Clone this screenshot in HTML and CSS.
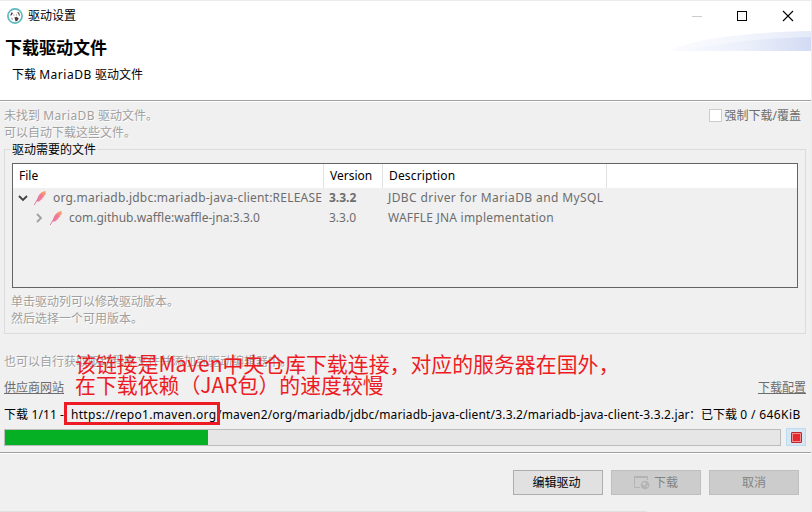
FILE: index.html
```html
<!DOCTYPE html>
<html lang="zh-CN">
<head>
<meta charset="utf-8">
<title>驱动设置</title>
<link rel="stylesheet" href="styles.css">
</head>
<body>
<div class="window">
  <div class="titlebar">
    <svg class="logo" width="16" height="16" viewBox="0 0 16 16">
      <circle cx="8" cy="8" r="7.1" fill="#fff" stroke="#5db8bf" stroke-width="1.7"/>
      <path d="M3.2 7.2 4.6 4.2 6 5 4.4 7.4ZM10 4 12 4.6 13 7.4 12 7.8 11.4 6ZM7.4 9.6 9.6 8.8 11.8 10.6 10.4 12.8 8.6 13.4 8 11.4Z" fill="#4a3d3c"/>
      <path d="M6.4 6.6h1v1h-1zM9 6.4h1v1H9zM4.6 9.6l1.4 1.6-.4.8-1.4-1.4z" fill="#8a7c7b"/>
    </svg>
    <span class="title">驱动设置</span>
    <svg class="controls" width="110" height="16" viewBox="0 0 110 16" fill="none">
      <path d="M0 8.500h10" stroke="#ccc"/>
      <rect x="45.5" y="3.5" width="9" height="9" stroke="#000"/>
      <path d="M91 3l10 10M101 3L91 13" stroke="#000" stroke-width="1.1"/>
    </svg>
  </div>
  <header class="banner">
    <div class="headings">
      <h1>下载驱动文件</h1>
      <p>下载 <span class="lat-sub">MariaDB</span> 驱动文件</p>
    </div>
    <svg class="swoosh" width="141" height="20" viewBox="0 0 141 20">
      <defs><linearGradient id="g"><stop offset="0" stop-color="#f7f9fe"/><stop offset=".5" stop-color="#ebeffa"/><stop offset="1" stop-color="#d2dbf4"/></linearGradient></defs>
      <path d="M0 20C20 8 80 1 141 0V20Z" fill="url(#g)" opacity=".6"/>
      <path d="M14 20C60 10 100 7 141 6V20Z" fill="url(#g)"/>
    </svg>
  </header>
  <main>
    <div class="intro">
      <div class="etched">未找到 <span class="lat-intro">MariaDB</span> 驱动文件。<br>可以自动下载这些文件。</div>
      <label class="force"><span class="box"></span><span>强制下载/覆盖</span></label>
    </div>
    <fieldset>
      <legend>驱动需要的文件</legend>
      <div class="table">
        <div class="row head"><span>File</span><span>Version</span><span><i class="fit-d">Description</i></span><span></span></div>
        <div class="row">
          <span class="file">
            <svg class="chev" width="10" height="10" viewBox="0 0 10 10"><path d="M1 3l4 4 4-4" fill="none" stroke="#404040" stroke-width="1.8"/></svg>
            <svg class="feather" width="14" height="16" viewBox="0 0 14 16"><use href="#feather"/></svg>
            <i class="fit-1">org.mariadb.jdbc:mariadb-java-client:RELEASE</i></span>
          <span><b>3.3.2</b></span><span><i class="fit-2">JDBC driver for MariaDB and MySQL</i></span>
        </div>
        <div class="row">
          <span class="file child">
            <svg class="chev" width="10" height="10" viewBox="0 0 10 10"><path d="M3 1l4 4-4 4" fill="none" stroke="#a0a0a0" stroke-width="1.8"/></svg>
            <svg class="feather" width="14" height="16" viewBox="0 0 14 16"><use href="#feather"/></svg>
            <i>com.github.waffle:waffle-jna:3.3.0</i></span>
          <span>3.3.0</span><span><i class="fit-4">WAFFLE JNA implementation</i></span>
        </div>
      </div>
      <div class="etched hint">单击驱动列可以修改驱动版本。<br>然后选择一个可用版本。</div>
    </fieldset>
    <div class="etched manual">也可以自行获取驱动程序文件并添加到驱动编辑器中。</div>
    <div class="links"><u>供应商网站</u><u>下载配置</u></div>
    <div class="status"><span class="s-a">下载 1/11 -</span><span class="s-b">https://repo1.maven.org</span><span class="s-c">/maven2/org/mariadb/jdbc/mariadb-java-client/3.3.2/mariadb-java-client-3.3.2.jar</span><span>：已下载 <i class="size">0 / 646KiB</i></span></div>
    <div class="progress">
      <div class="track"><div class="fill"></div></div>
      <div class="stop"><span></span></div>
    </div>
  </main>
  <footer>
    <div class="btn">编辑驱动</div>
    <div class="btn off">
      <svg width="16" height="14" viewBox="0 0 16 14"><path d="M13.5 4V.5H.5v11H6M.5 1.5h13" fill="none" stroke="#b3b3b3"/><circle cx="11" cy="9" r="4.3" fill="#b3b3b3"/><path d="M8 7l3-1 1 2-2 2zM12 10l2-1-1 3z" fill="#ccc"/></svg>
      下载</div>
    <div class="btn off">取消</div>
  </footer>
  <div class="frame"></div>
  <div class="note"><div>该链接是Maven中央仓库下载连接，对应的服务器在国外，</div><div>在下载依赖（JAR包）的速度较慢</div></div>
  <div class="edge"></div>
</div>
<svg class="defs" width="0" height="0">
  <defs>
    <linearGradient id="f" x1="1" y1="0" x2="0" y2="1"><stop offset="0" stop-color="#f9b060"/><stop offset=".4" stop-color="#f5808c"/><stop offset="1" stop-color="#e57ab0"/></linearGradient>
    <g id="feather"><path d="M12.6 1C9 1.5 5.2 4.5 4.2 9L3 11.8 5 11.4 8 11 6.6 10.2 9.8 9 8.8 8.200 11.4 6.8 10.4 6 12.8 4.400Z" fill="url(#f)"/><path d="M9 5C6 7.500 4 10 1.200 15" fill="none" stroke="#e0709f" stroke-width=".9"/></g>
  </defs>
</svg>
</body>
</html>
```
FILE: styles.css
```css
* { box-sizing: border-box; }
body { margin: 0; background: #f0f0f0; font: 12px/17px "Noto Sans", "Noto Sans CJK SC", sans-serif; color: #000; overflow: hidden; }
i { font-style: normal; }
.window { position: relative; width: 812px; height: 512px; border-top: 1px solid #ececec; border-right: 1px solid #ececec; background: #f0f0f0; white-space: nowrap; overflow: hidden; }
.titlebar { display: flex; align-items: center; height: 29px; padding-left: 7px; background: #fff; }
.title { margin-left: 5px; }
.controls { margin-left: auto; margin-right: 9px; }
.banner { display: flex; justify-content: space-between; height: 70px; background: #fff; }
.headings { padding-top: 6px; }
h1 { margin: 0 0 0 5px; font-size: 17px; line-height: 24px; font-weight: 700; }
p { margin: 6px 0 0 12px; }
.lat-sub { letter-spacing: .55px; }
.swoosh { margin-top: 1px; }
main { border-top: 1px solid #a0a0a0; box-shadow: inset 0 1px #fff; padding: 6px 5px 0 4px; height: 352px; }
.intro { display: flex; justify-content: space-between; height: 34px; }
.etched { color: #a0a0a0; text-shadow: 1px 1px #fff; }
.lat-intro { letter-spacing: .4px; }
.force { display: flex; height: 17px; margin-right: 5px; color: #6d6d6d; }
.box { width: 13px; height: 13px; margin: 2px 3px 0 0; border: 1px solid #ccc; background: #fff; }
fieldset { height: 193px; width: 802px; margin: 0; padding: 5px 7px 0; border: 1px solid #dcdcdc; }
legend { padding: 0 1px; height: 17px; line-height: 17px; margin-left: -1px; }
.table { width: 786px; height: 125px; border: 1px solid #646464; color: #6d6d6d; }
.row { display: grid; grid-template-columns: 311px 59px 224px 1fr; height: 20px; line-height: 20px; }
.row > span { padding-left: 5px; }
.head { height: 24px; line-height: 23px; background: #fff; color: #000; }
.head > span { border-right: 1px solid #e2e2e2; padding-left: 6px; }
.head > span:last-child { border: 0; }
.file { display: flex; align-items: center; }
.row > .child { padding-left: 21px; }
.feather { margin: 0 6px 0 5px; }
.fit-d { letter-spacing: .15px; }
.fit-1 { letter-spacing: .21px; }
.fit-2 { letter-spacing: .4px; }
.fit-4 { letter-spacing: .23px; }
.hint { margin: 5px 0 0 -1px; }
.manual { margin-top: 19px; }
.links { display: flex; justify-content: space-between; margin-top: 9px; color: #6d6d6d; }
.status { display: flex; margin-top: 10px; overflow: hidden; }
.s-a { width: 67px; letter-spacing: .1px; }
.s-b { width: 146px; letter-spacing: .3px; }
.s-c { width: 472px; letter-spacing: .165px; }
.size { letter-spacing: .4px; }
.progress { display: flex; justify-content: space-between; margin-top: 5px; }
.track { width: 777px; height: 17px; margin-top: 1px; border: 1px solid #bcbcbc; background: #e6e6e6; }
.fill { width: 203px; height: 15px; background: #06b025; }
.stop { width: 20px; height: 18px; border: 1px solid #bddcf4; background: #d8e6f2; display: grid; place-items: center; }
.stop span { width: 11px; height: 11px; border: 1px solid #b92732; border-radius: 1px; background: #e8262f; box-shadow: inset 0 0 0 1px #f58c8c; }
footer { display: flex; justify-content: flex-end; gap: 8px; height: 59px; padding: 17px 12px 0 0; border-top: 1px solid #a0a0a0; box-shadow: inset 0 1px #fff; }
.btn { display: flex; align-items: center; justify-content: center; width: 90px; height: 25px; padding-right: 3px; border: 1px solid #adadad; background: #e1e1e1; }
.off { padding: 0; background: #ccc; border-color: #bfbfbf; color: #838383; }
.off svg { margin-right: 4px; }
.frame { position: absolute; left: 64px; top: 401px; width: 156px; height: 23px; border: 3px solid #ed1c24; }
.note { position: absolute; left: 75px; top: 352px; color: #ed1c24; font: 20.9px/21px "Noto Sans CJK SC", sans-serif; }
.edge { position: absolute; left: 0; bottom: 0; width: 647px; height: 1px; background: #e0e0e0; }
.defs { position: absolute; }
```
